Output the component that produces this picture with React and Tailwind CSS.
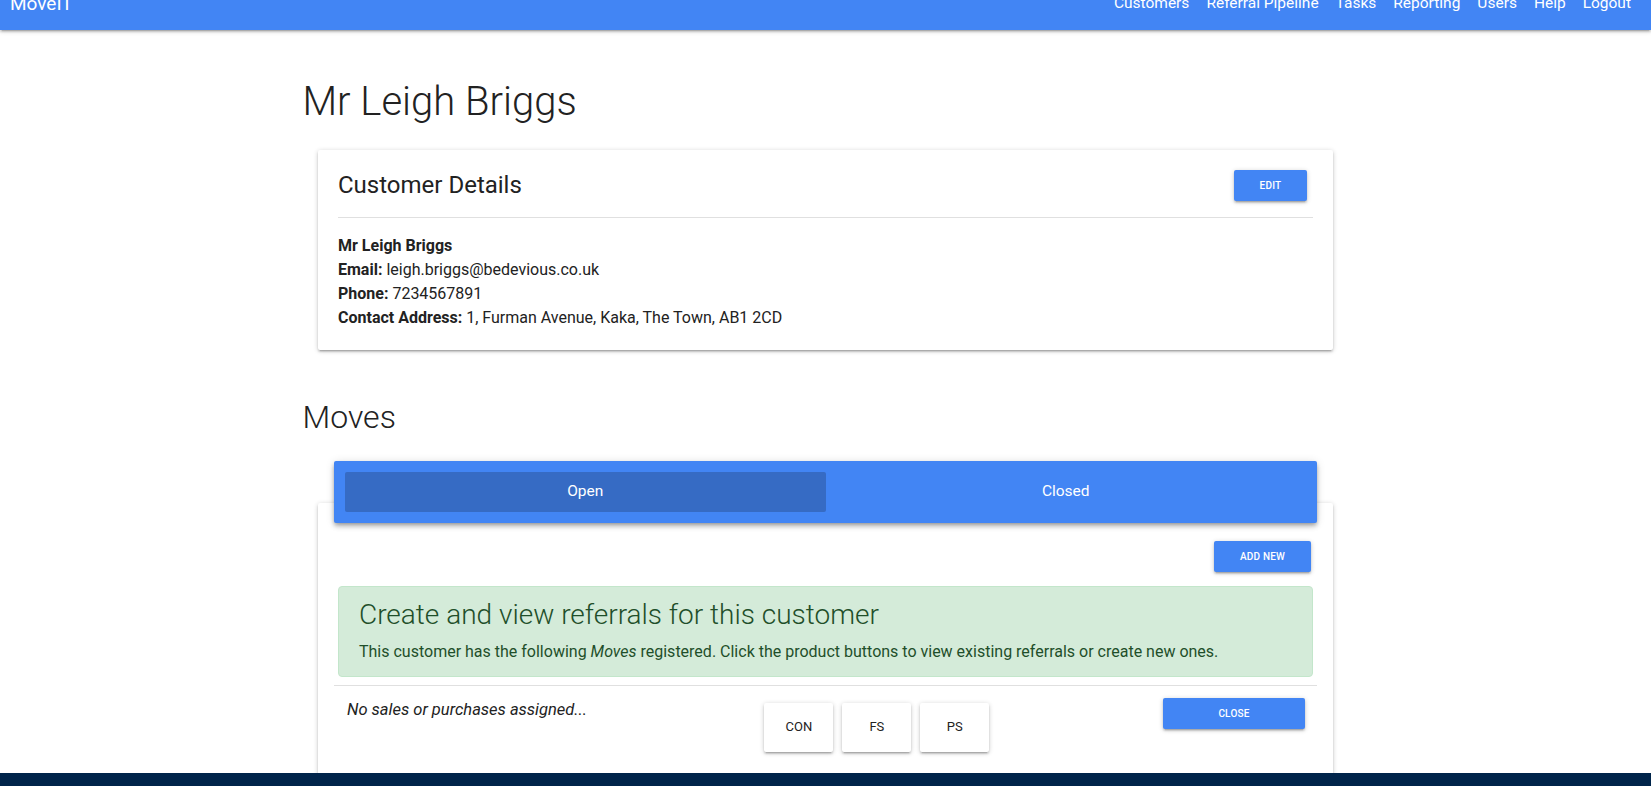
import React from 'react';

const navLinks = ['Customers', 'Referral Pipeline', 'Tasks', 'Reporting', 'Users', 'Help', 'Logout'];

const depth1 = 'shadow-[0_2px_2px_0_rgba(0,0,0,0.14),0_3px_1px_-2px_rgba(0,0,0,0.12),0_1px_5px_0_rgba(0,0,0,0.2)]';
const light = "font-['Roboto_Light','Roboto',sans-serif] font-light";

const Navbar = () => (
  <nav className={`relative z-20 h-[30px] shrink-0 overflow-hidden bg-[#4285f4] text-white ${depth1}`}>
    <div className="flex h-full items-start justify-between pl-[10px] pr-[20px]">
      <span className="-mt-[6px] block text-[19px] leading-[19px]">MoveIT</span>
      <ul className="flex gap-[17px]">
        {navLinks.map((link) => (
          <li key={link} className="-mt-[4px] text-[15.5px] leading-[15.5px]">
            {link}
          </li>
        ))}
      </ul>
    </div>
  </nav>
);

const BlueButton = ({ children, className = '' }) => (
  <button
    className={`h-[31px] rounded-[2px] bg-[#4285f4] text-[10px] font-medium uppercase tracking-[0.2px] text-white ${depth1} ${className}`}
  >
    {children}
  </button>
);

const CustomerDetails = () => (
  <div className={`mx-[17.5px] rounded-[2px] bg-white px-5 pb-5 pt-[19px] ${depth1}`}>
    <div className="flex items-center justify-between">
      <h2 className="text-[24px] leading-[32px] text-[#222]">Customer Details</h2>
      <BlueButton className="mr-[6px] w-[73px]">Edit</BlueButton>
    </div>
    <div className="mt-4 h-px bg-[#e0e0e0]" />
    <div className="mt-[16px] text-[16px] leading-[24px] text-[#222]">
      <div className="font-bold">Mr Leigh Briggs</div>
      <div>
        <span className="font-bold">Email:</span> leigh.briggs@bedevious.co.uk
      </div>
      <div>
        <span className="font-bold">Phone:</span> 7234567891
      </div>
      <div>
        <span className="font-bold">Contact Address:</span> 1, Furman Avenue, Kaka, The Town, AB1 2CD
      </div>
    </div>
  </div>
);

const ProductButton = ({ label }) => (
  <button className={`h-[49px] w-[69px] rounded-[2px] bg-white text-[13px] text-[#222] ${depth1}`}>
    {label}
  </button>
);

const Moves = () => (
  <div>
    <div className="relative z-10 mx-[33.5px] flex h-[62px] rounded-[2px] bg-[#4285f4] p-[11px] text-[15.5px] text-white shadow-[0_4px_5px_0_rgba(0,0,0,0.14),0_1px_10px_0_rgba(0,0,0,0.12),0_2px_4px_-1px_rgba(0,0,0,0.3)]">
      <div className="flex flex-1 items-center justify-center rounded-[2px] bg-[#366bc4]">Open</div>
      <div className="flex flex-1 items-center justify-center">Closed</div>
    </div>
    <div className={`mx-[17.5px] -mt-[20px] rounded-t-[2px] bg-white px-5 pb-8 pt-[38px] ${depth1}`}>
      <div className="flex justify-end">
        <BlueButton className="mr-[2px] w-[97px]">Add New</BlueButton>
      </div>
      <div className="mt-[14px] rounded-[4px] border border-[#c3e6cb] bg-[#d4ebd9] px-5 pb-[12px] pt-[11px] text-[#1f4f2a]">
        <h4 className={`mb-[8px] text-[28px] leading-[1.2] ${light}`}>Create and view referrals for this customer</h4>
        <p className="text-[16px] leading-[24px]">
          This customer has the following <em>Moves</em> registered. Click the product buttons to view existing
          referrals or create new ones.
        </p>
      </div>
      <div className="-mx-[4px] mt-[8px] h-px bg-[#e0e0e0]" />
      <div className="-mx-[4px] grid grid-cols-3 pt-[12px]">
        <div className="pl-[13px] text-[16.5px] italic leading-[24px] text-[#222]">No sales or purchases assigned...</div>
        <div className="mt-[5px] flex justify-end gap-[9px]">
          <ProductButton label="CON" />
          <ProductButton label="FS" />
          <ProductButton label="PS" />
        </div>
        <div className="flex justify-end pr-[12px]">
          <BlueButton className="w-[142px]">Close</BlueButton>
        </div>
      </div>
    </div>
  </div>
);

const App = () => (
  <div className="flex h-screen flex-col overflow-hidden bg-white font-['Roboto',sans-serif]">
    <Navbar />
    <main className="flex-1 overflow-hidden">
      <div className="mx-auto w-[1050px]">
        <h1 className={`mb-[25px] mt-[49px] pl-[2px] text-[40px] leading-[46px] text-[#222] ${light}`}>Mr Leigh Briggs</h1>
        <CustomerDetails />
        <h3 className={`mb-[26px] mt-[50px] pl-[2px] text-[32px] leading-[35px] text-[#222] ${light}`}>Moves</h3>
        <Moves />
      </div>
    </main>
    <footer className="h-[13px] shrink-0 bg-[#00244a]" />
  </div>
);

export default App;
